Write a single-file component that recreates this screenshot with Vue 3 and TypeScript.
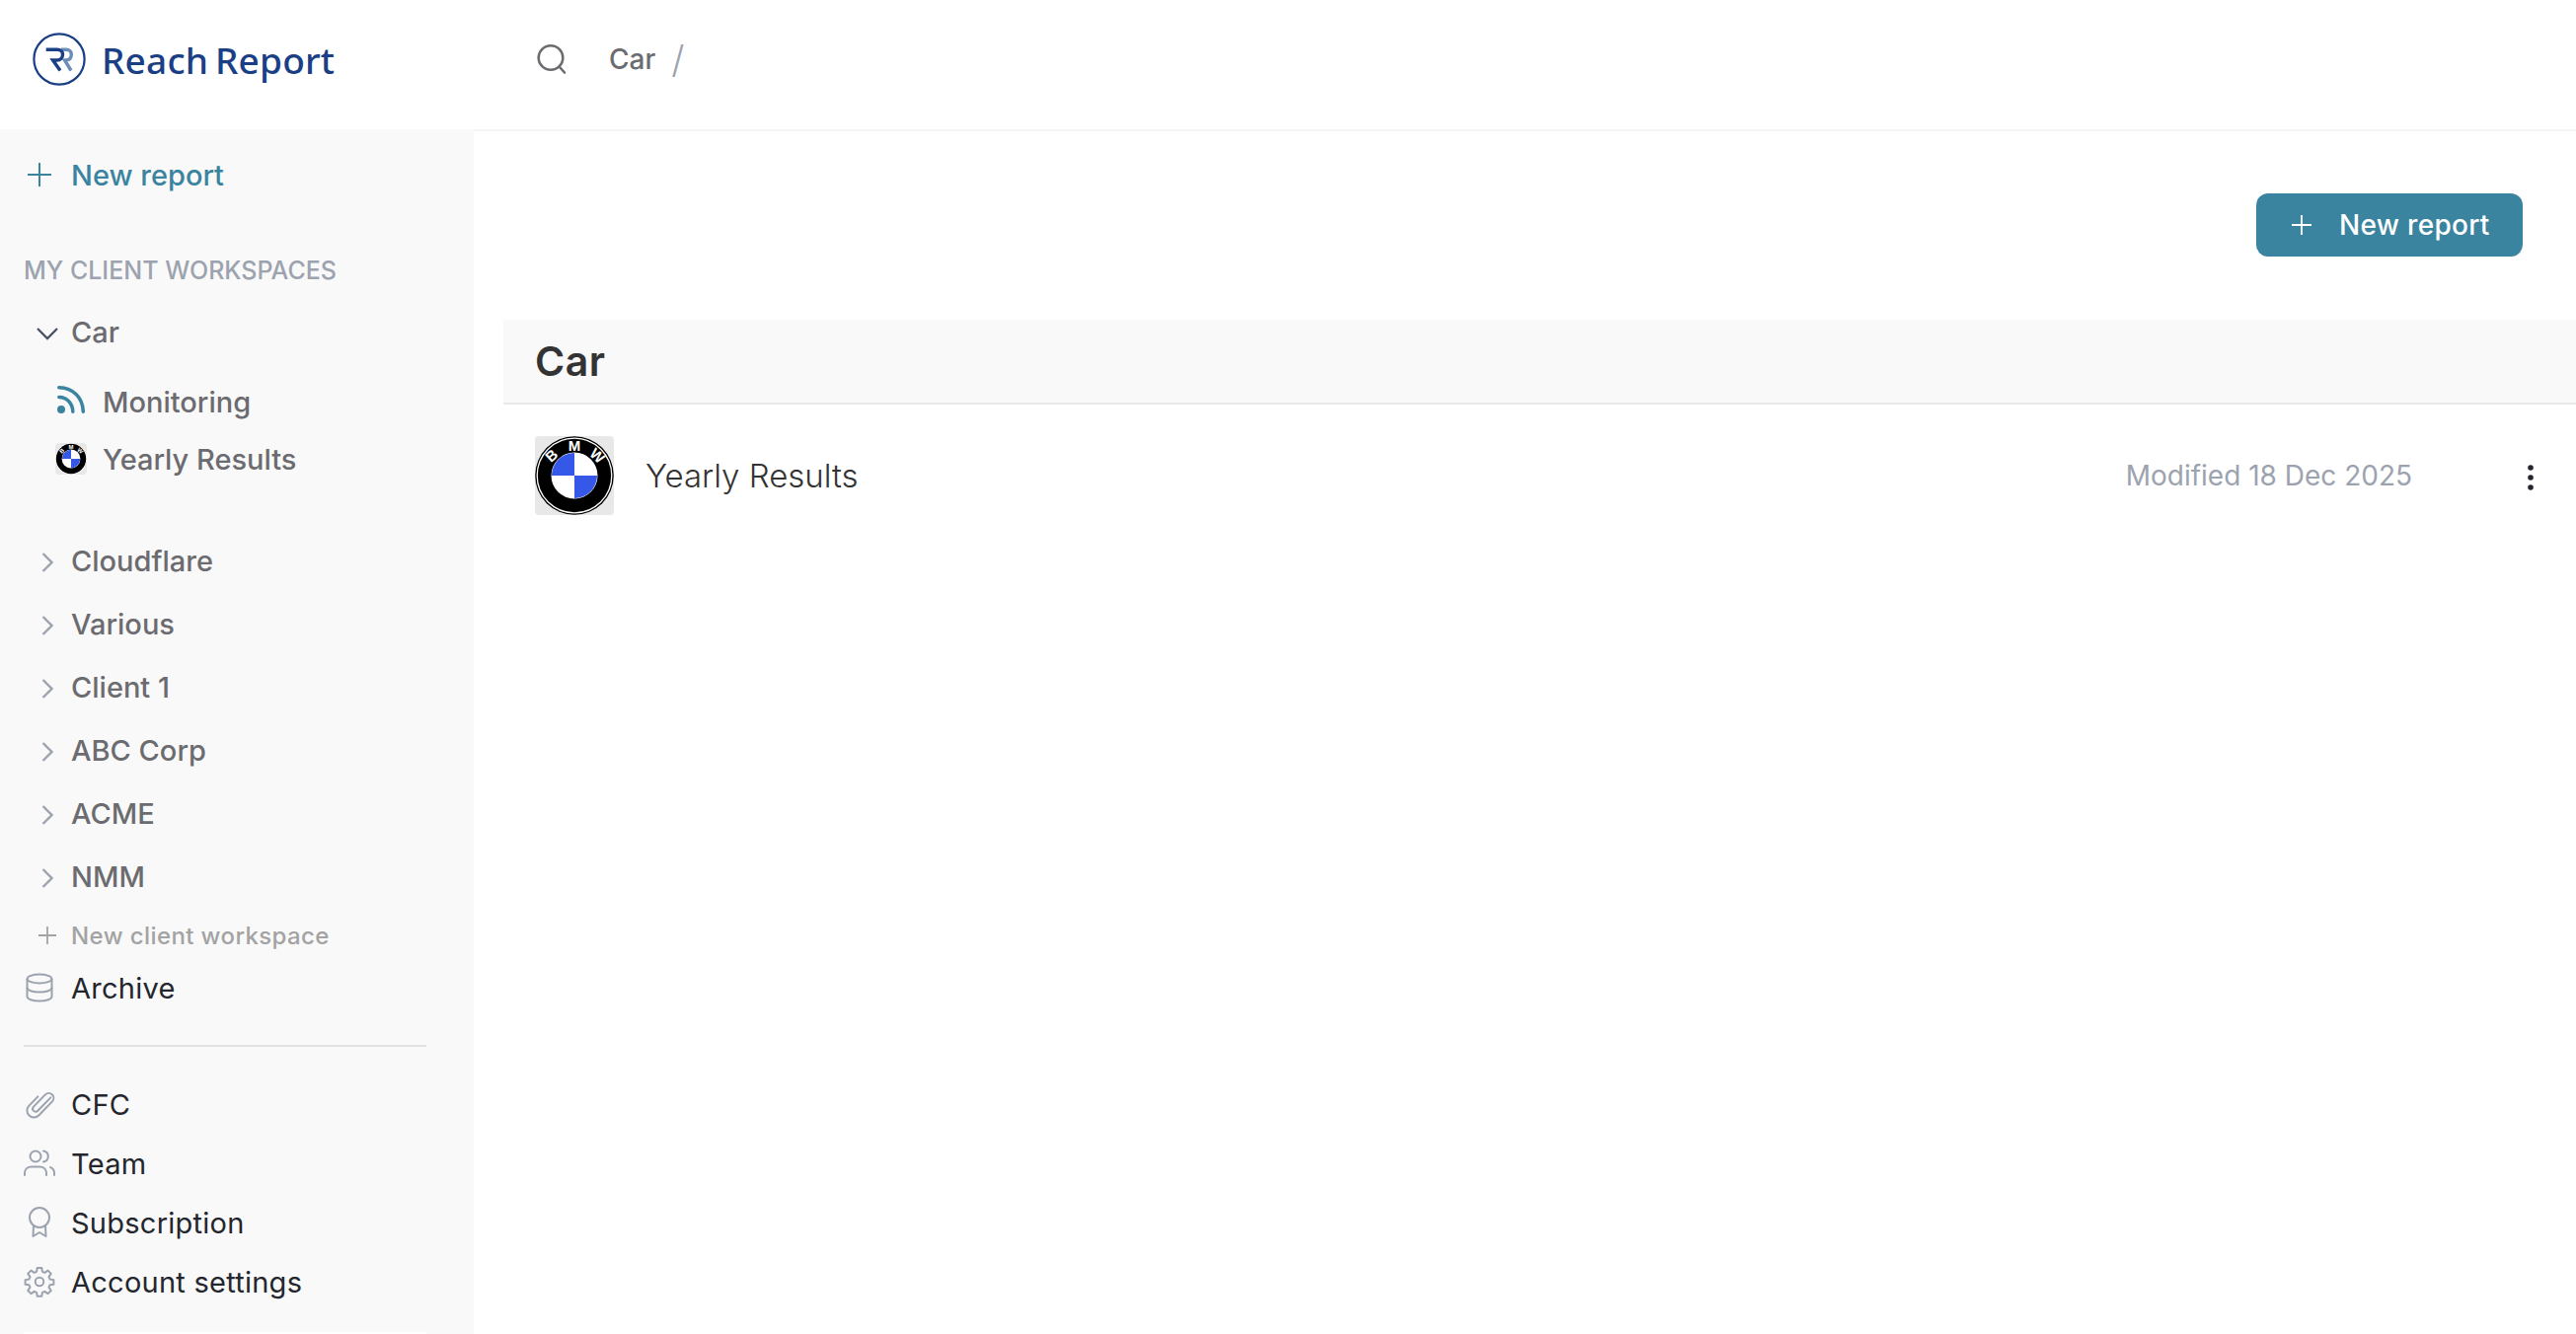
<script setup lang="ts">
const clients = ['Cloudflare', 'Various', 'Client 1', 'ABC Corp', 'ACME', 'NMM']
</script>

<template>
  <div class="page">
    <header class="topbar">
      <div class="brand">
        <svg class="logo" viewBox="0 0 54 54" fill="none">
          <circle cx="27" cy="27" r="25.600" stroke="#1a3f85" stroke-width="2.200" />
          <path d="M29 17.300h5c3.500 0 5.300 2.300 5.300 5 0 3.200-2 5.500-5.500 5.700h-1.300l6.500 10.500" stroke="#6c8db8" stroke-width="3.400" />
          <path d="M13.700 17.300h11.300c3.500 0 5.500 2.300 5.500 5 0 3.200-2.200 5.700-5.700 5.700h-4.300l7.500 10.500" stroke="#1a3f85" stroke-width="3.400" />
        </svg>
        <span class="brand-name">Reach Report</span>
      </div>
      <svg class="search" viewBox="0 0 32 32" fill="none" stroke="#6b6b70" stroke-width="2.600" stroke-linecap="round">
        <circle cx="15" cy="14.500" r="12.300" />
        <path d="M24 24l5 5.500" />
      </svg>
      <span class="crumb">Car</span>
      <span class="crumb-sep">/</span>
    </header>

    <div class="body">
      <aside class="sidebar">
        <div class="new-link">
          <svg class="icon-plus" viewBox="0 0 24 24" fill="none" stroke="#3b84a0" stroke-width="2">
            <path d="M12 0v24M0 12h24" />
          </svg>
          <span>New report</span>
        </div>

        <div class="section-label">MY CLIENT WORKSPACES</div>

        <div class="client open">
          <svg class="chev-down" viewBox="0 0 22 14" fill="none" stroke="#4b5563" stroke-width="2.400">
            <path d="M1 2l10 10L21 2" />
          </svg>
          <span>Car</span>
        </div>

        <div class="report first">
          <svg class="rss" viewBox="0 0 28 28" fill="none" stroke="#3b84a0" stroke-width="3.500" stroke-linecap="round">
            <circle cx="4" cy="24" r="4" fill="#3b84a0" stroke="none" />
            <path d="M1.800 11.500c8 .2 13.800 6 14 14.700" />
            <path d="M1.800 1.800c14.500 .5 24 10 24.500 24.400" />
          </svg>
          <span>Monitoring</span>
        </div>
        <div class="report">
          <span class="thumb small">
            <svg viewBox="0 0 80 80">
              <circle cx="40" cy="40" r="39.500" fill="#fff" />
              <circle cx="40" cy="40" r="38" fill="#000" />
              <circle cx="40" cy="40" r="23.500" fill="#fff" />
              <path d="M40 17a23 23 0 0 0-23 23h23zM40 63a23 23 0 0 0 23-23H40z" fill="#3558e8" />
              <g class="bmw-text" fill="#fff" text-anchor="middle">
                <text transform="translate(17 20) rotate(-42)" y="5">B</text>
                <text x="40" y="14.500">M</text>
                <text transform="translate(63 20) rotate(42)" y="5">W</text>
              </g>
            </svg>
          </span>
          <span>Yearly Results</span>
        </div>

        <div class="client-list">
          <div v-for="name in clients" :key="name" class="client">
            <svg class="chev-right" viewBox="0 0 12 20" fill="none" stroke="#9ca3af" stroke-width="2.400">
              <path d="M1.500 1l9 9-9 9" />
            </svg>
            <span>{{ name }}</span>
          </div>
        </div>

        <div class="new-client">
          <svg class="icon-plus-small" viewBox="0 0 20 20" fill="none" stroke="#a3a3a3" stroke-width="1.800">
            <path d="M10 1v18M1 10h18" />
          </svg>
          <span>New client workspace</span>
        </div>

        <div class="nav-item archive">
          <span class="nav-icon">
            <svg viewBox="0 0 28 30" width="28" height="30" fill="none" stroke="#9ca3af" stroke-width="2">
              <ellipse cx="14" cy="6" rx="12.500" ry="4.500" />
              <path d="M1.500 6v18c0 2.500 5.500 4.500 12.500 4.500s12.500-2 12.500-4.500V6" />
              <path d="M1.500 15c0 2.500 5.500 4.500 12.500 4.500s12.500-2 12.500-4.500" />
            </svg>
          </span>
          <span>Archive</span>
        </div>

        <div class="divider"></div>

        <div class="nav-item">
          <span class="nav-icon">
            <svg viewBox="0 0 24 24" width="32" height="32" fill="none" stroke="#9ca3af" stroke-width="1.500" stroke-linecap="round" stroke-linejoin="round">
              <path d="M20.500 6.500l-9.800 10.100a2.200 2.200 0 0 1-3.200-3.100l8.900-9.200a3.700 3.700 0 0 1 5.300 5.200l-10.300 10.600a5.200 5.200 0 0 1-7.500-7.200l6.900-7.100" transform="translate(0 0.500)" />
            </svg>
          </span>
          <span>CFC</span>
        </div>
        <div class="nav-item">
          <span class="nav-icon">
            <svg viewBox="0 0 32 28" width="32" height="28" fill="none" stroke="#9ca3af" stroke-width="2" stroke-linecap="round">
              <circle cx="12" cy="7" r="5.500" />
              <path d="M20 1.500c3.600 .6 4.800 3 4.800 5.500s-1.200 4.800-4.800 5.500" />
              <path d="M1 26v-2c0-4 3-6.500 7-6.500h8c4 0 7 2.500 7 6.500v2" />
              <path d="M27 18c2.500 1 4 3 4 6v2" />
            </svg>
          </span>
          <span>Team</span>
        </div>
        <div class="nav-item">
          <span class="nav-icon">
            <svg viewBox="0 0 24 32" width="24" height="32" fill="none" stroke="#9ca3af" stroke-width="2" stroke-linejoin="round">
              <circle cx="12" cy="11" r="10" />
              <path d="M6 19l-.500 11L12 26l6.500 4L18 19" />
            </svg>
          </span>
          <span>Subscription</span>
        </div>
        <div class="nav-item">
          <span class="nav-icon">
            <svg viewBox="0 0 24 24" width="32" height="32" fill="none" stroke="#9ca3af" stroke-width="1.500" stroke-linejoin="round">
              <path d="M10.300 1.500h3.400l.5 2.900 1.800.8 2.400-1.700 2.400 2.400-1.700 2.400.8 1.800 2.900.5v3.400l-2.900.5-.8 1.800 1.700 2.400-2.400 2.400-2.400-1.700-1.800.8-.5 2.900h-3.400l-.5-2.900-1.800-.8-2.400 1.700-2.400-2.400 1.700-2.400-.8-1.800-2.900-.5v-3.400l2.900-.5.8-1.800-1.700-2.400 2.400-2.400 2.400 1.700 1.800-.8z" />
              <circle cx="12" cy="12" r="3.200" />
            </svg>
          </span>
          <span>Account settings</span>
        </div>

        <div class="sidebar-foot"></div>
      </aside>

      <main class="content">
        <div class="actions">
          <button class="btn-new" type="button">
            <svg class="icon-plus-btn" viewBox="0 0 20 20" fill="none" stroke="#fff" stroke-width="1.800">
              <path d="M10 0v20M0 10h20" />
            </svg>
            <span>New report</span>
          </button>
        </div>

        <section class="group">
          <h2 class="group-title">Car</h2>
          <div class="row">
            <span class="thumb">
              <svg viewBox="0 0 80 80">
                <circle cx="40" cy="40" r="39.800" fill="#000" />
                <circle cx="40" cy="40" r="37.800" fill="none" stroke="#fff" stroke-width="1.300" />
                <circle cx="40" cy="40" r="23.500" fill="#fff" />
                <path d="M40 17a23 23 0 0 0-23 23h23zM40 63a23 23 0 0 0 23-23H40z" fill="#3558e8" />
                <g class="bmw-text" fill="#fff" text-anchor="middle">
                  <text transform="translate(17 20) rotate(-42)" y="5">B</text>
                  <text x="40" y="14.500">M</text>
                  <text transform="translate(63 20) rotate(42)" y="5">W</text>
                </g>
              </svg>
            </span>
            <span class="row-title">Yearly Results</span>
            <span class="row-date">Modified 18 Dec 2025</span>
            <svg class="more" viewBox="0 0 6 26" fill="#23262d">
              <circle cx="3" cy="3" r="2.800" />
              <circle cx="3" cy="13" r="2.800" />
              <circle cx="3" cy="23" r="2.800" />
            </svg>
          </div>
        </section>
      </main>
    </div>
  </div>
</template>

<style>
html,
body {
  margin: 0;
  background: #fff;
}
</style>

<style scoped>
.page {
  width: 2610px;
  height: 1352px;
  display: flex;
  flex-direction: column;
  overflow: hidden;
  font-family: Inter, "Open Sans", sans-serif;
}

.topbar {
  height: 131px;
  flex: none;
  display: flex;
  align-items: center;
  background: #fff;
  box-sizing: border-box;
  padding: 0 0 11px 33px;
}

.brand {
  width: 510px;
  display: flex;
  align-items: center;
  gap: 16px;
}

.logo {
  width: 54px;
  height: 54px;
}

.brand-name {
  font-family: "Noto Sans", sans-serif;
  font-size: 37px;
  font-weight: 500;
  color: #1a3f85;
  word-spacing: -3px;
  letter-spacing: .2px;
}

.search {
  width: 32px;
  height: 32px;
}

.crumb {
  margin-left: 42px;
  font-size: 28px;
  font-weight: 500;
  color: #6b6b70;
}

.crumb-sep {
  margin-left: 16px;
  font-size: 38px;
  font-weight: 300;
  color: #9ca3af;
}

.body {
  flex: 1;
  display: flex;
  min-height: 0;
}

.sidebar {
  width: 480px;
  flex: none;
  background: #f9f9f9;
  box-sizing: border-box;
  padding: 26px 0 0 24px;
  display: flex;
  flex-direction: column;
  overflow: hidden;
  font-size: 29px;
}

.sidebar > * {
  flex: none;
}

.new-link {
  height: 40px;
  display: flex;
  align-items: center;
  gap: 20px;
  padding-left: 4px;
  color: #3b84a0;
  font-weight: 500;
}

.icon-plus {
  width: 24px;
  height: 24px;
}

.section-label {
  margin-top: 59px;
  height: 36px;
  line-height: 36px;
  font-size: 25px;
  font-weight: 500;
  color: #9ca3af;
}

.client {
  height: 64px;
  display: flex;
  align-items: center;
  padding-left: 14px;
  color: #6b6b70;
  font-weight: 500;
}

.client.open {
  margin-top: 24px;
  height: 40px;
}

.chev-down {
  width: 22px;
  height: 14px;
  margin: 4px 13px 0 -1px;
}

.chev-right {
  width: 12px;
  height: 20px;
  margin: 4px 18px 0 4px;
}

.report {
  margin-top: 10px;
  height: 48px;
  display: flex;
  align-items: center;
  gap: 16px;
  padding-left: 32px;
  color: #6b6b70;
  font-weight: 500;
}

.report.first {
  margin-top: 27px;
}

.rss {
  width: 28px;
  height: 28px;
  margin: 0 2px 4px 2px;
}

.client-list {
  margin-top: 47px;
}

.new-client {
  margin-top: 8px;
  height: 40px;
  display: flex;
  align-items: center;
  gap: 14px;
  padding-left: 14px;
  font-size: 24px;
  font-weight: 500;
  letter-spacing: .4px;
  color: #a3a3a3;
}

.icon-plus-small {
  width: 20px;
  height: 20px;
}

.nav-item {
  height: 60px;
  display: flex;
  align-items: center;
  color: #23262d;
  font-weight: 400;
  letter-spacing: .25px;
}

.nav-item.archive {
  margin-top: 11px;
  height: 44px;
}

.nav-icon {
  width: 48px;
  flex: none;
  display: flex;
  justify-content: center;
  padding-right: 16px;
  box-sizing: border-box;
}

.divider {
  margin-top: 36px;
  margin-bottom: 28px;
  width: 408px;
  height: 2px;
  background: #e3e3e3;
}

.sidebar-foot {
  margin-top: 21px;
  width: 408px;
  height: 20px;
  background: #fff;
}

.content {
  flex: 1;
  min-width: 0;
  border-top: 2px solid #f5f5f5;
  box-sizing: border-box;
  padding-left: 30px;
}

.actions {
  display: flex;
  justify-content: flex-end;
  padding: 63px 54px 0 0;
}

.btn-new {
  width: 270px;
  height: 64px;
  border: none;
  border-radius: 12px;
  background: #3b84a0;
  color: #fff;
  display: flex;
  align-items: center;
  gap: 28px;
  padding: 0 0 0 36px;
  font-family: inherit;
  font-size: 28px;
  font-weight: 500;
  letter-spacing: .3px;
}

.icon-plus-btn {
  width: 20px;
  height: 20px;
  flex: none;
}

.group {
  margin-top: 64px;
}

.group-title {
  margin: 0;
  height: 84px;
  line-height: 84px;
  padding-left: 32px;
  background: #f9f9f9;
  border-bottom: 2px solid #e8e8e8;
  font-size: 41px;
  font-weight: 600;
  letter-spacing: .5px;
  color: #333;
}

.row {
  display: flex;
  align-items: center;
  padding: 32px 0 0 32px;
}

.thumb {
  width: 80px;
  height: 80px;
  flex: none;
  display: block;
  background: #e8e8e8;
  border-radius: 4px;
}

.thumb svg {
  display: block;
  width: 100%;
  height: 100%;
}

.thumb.small {
  width: 32px;
  height: 32px;
}

.bmw-text {
  font-family: "Liberation Sans", sans-serif;
  font-size: 15px;
  font-weight: 700;
}

.row-title {
  margin-left: 32px;
  font-size: 33px;
  font-weight: 300;
  color: #333;
}

.row-date {
  margin-left: auto;
  font-size: 28px;
  font-weight: 400;
  color: #9ca3af;
}

.more {
  width: 6px;
  height: 26px;
  margin: 4px 43px 0 117px;
}
</style>
